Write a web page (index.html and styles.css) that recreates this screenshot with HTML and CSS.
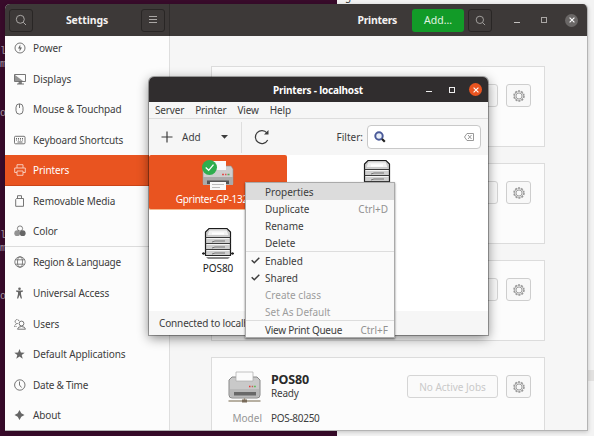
FILE: index.html
```html
<!DOCTYPE html>
<html lang="en">
<head>
<meta charset="utf-8">
<title>Printers - localhost</title>
<link rel="stylesheet" href="styles.css">
</head>
<body>
<svg class="defs" width="0" height="0">
  <symbol id="search" viewBox="0 0 12 12"><g fill="none" stroke="currentColor"><circle cx="5.3" cy="5.3" r="4"/><path d="M8.3 8.3L11 11"/></g></symbol>
  <symbol id="gear" viewBox="0 0 12 12"><g fill="none" stroke="currentColor"><circle cx="6" cy="6" r="5" stroke-width="1.5" stroke-dasharray="2 1.14"/><circle cx="6" cy="6" r="4.3" stroke-width=".7"/><circle cx="6" cy="6" r="3" stroke-width=".9"/></g></symbol>
  <symbol id="check" viewBox="0 0 9 7"><path d="M.7 3.2L3.3 5.7L8.3.8" fill="none" stroke="currentColor" stroke-width="1.5"/></symbol>
  <symbol id="close" viewBox="0 0 6 6"><path d="M.6.6L5.4 5.4M5.4.6L.6 5.4" stroke="currentColor" stroke-width="1.1"/></symbol>
  <symbol id="stack" viewBox="0 0 34 32">
    <path d="M4.500 28.500V5L8 1.500H26L29.500 5V28.500Z" fill="#cfcfcf"/>
    <path d="M8 3H26L28 8.500H6Z" fill="#f2f2f2" stroke="#bbb" stroke-width=".6"/>
    <path d="M11 6.500H23" stroke="#fff" stroke-width="2"/>
    <path d="M5.500 11.500H28.500M5.500 17.500H28.500M5.500 23.500H28.500" stroke="#f4f4f4"/>
    <path d="M4.500 28.500V5L8 1.500H26L29.500 5V28.500" fill="none" stroke="#1c1c1c" stroke-width="1.200"/>
    <path d="M4.500 10.500H29.500M4.500 16.500H29.500M4.500 22.500H29.500" stroke="#3c3c3c"/>
    <path d="M11 15L14 14H24M11 21L14 20H24M11 27L14 26H24" fill="none" stroke="#777"/>
    <path d="M1 26.500H5M29 26.500H33" stroke="#333"/>
    <circle cx="2.500" cy="26.500" r="1.200" fill="#222"/><circle cx="31.500" cy="26.500" r="1.200" fill="#222"/>
    <path d="M4 28.500H30" stroke="#222"/><path d="M5 30H29L27 32H7Z" fill="#888"/>
  </symbol>
</svg>
<div class="desktop">
  <div class="backdrop"><span class="terminal"></span><span class="page"></span></div>
  <pre class="term first">l
m</pre><pre class="term second">o</pre><pre class="term third">l
m</pre><pre class="term fourth">o</pre>
  <span class="stray">g</span><span class="strip"></span>

  <section class="settings">
    <header class="bar">
      <div class="bar-left">
        <span class="tool"><svg width="12" height="12"><use href="#search"/></svg></span>
        <b>Settings</b>
        <span class="tool"><svg width="8" height="8"><path d="M0 .5H8M0 3.500H8M0 6.500H8" stroke="currentColor"/></svg></span>
      </div>
      <div class="bar-right">
        <b>Printers</b><span class="add">Add…</span>
        <span class="tool"><svg width="11" height="11"><use href="#search"/></svg></span>
        <i class="min"></i><i class="max"></i><span class="round"><svg width="6" height="6"><use href="#close"/></svg></span>
      </div>
    </header>
    <div class="body">
      <nav class="side">
        <div class="row"><svg viewBox="0 0 12 12"><circle cx="6" cy="6" r="5" fill="none" stroke="currentColor" stroke-width=".9"/><path d="M6.300 2.500L4 6.500H5.700L5.500 9.500L8 5.500H6.300Z" fill="currentColor"/></svg>Power</div>
        <div class="row"><svg viewBox="0 0 12 12"><path d="M.5 1.500H11.500V8.500H.5ZM3 11H10M6 9V11" fill="none" stroke="currentColor" stroke-width=".9"/><path d="M1 2L9 8H1ZM5 8H8V11H4Z" fill="currentColor" opacity=".7"/></svg>Displays</div>
        <div class="row"><svg viewBox="0 0 12 12"><rect x="2" y=".8" width="7" height="10.400" rx="3.500" fill="none" stroke="currentColor" stroke-width=".9"/><path d="M5.500 1V5" stroke="currentColor" stroke-width=".9"/></svg>Mouse &amp; Touchpad</div>
        <div class="row"><svg viewBox="0 0 12 12"><rect x=".5" y="2.300" width="10.500" height="7.500" rx="1" fill="none" stroke="currentColor" stroke-width=".9"/><path d="M2 4.500H10M2 6H10" stroke="currentColor" stroke-dasharray="1 1"/><path d="M3.500 8H8.500" stroke="currentColor"/></svg>Keyboard Shortcuts</div>
        <div class="row active"><svg viewBox="0 0 12 12"><path d="M3 4V.7H9V4M3 8.500H.7V4H11.300V8.500H9M3 7H9V11.300H3Z" fill="none" stroke="currentColor" stroke-width=".9"/></svg>Printers</div>
        <div class="row"><svg viewBox="0 0 12 12"><path d="M2.500 3.500H9.500V11.300H1.700V4.500ZM3.500 3.300V.7H7.500V3.300" fill="none" stroke="currentColor" stroke-width=".9"/></svg>Removable Media</div>
        <div class="row last"><svg viewBox="0 0 12 12"><circle cx="6" cy="3.500" r="2.600" fill="none" stroke="currentColor" stroke-width=".8"/><circle cx="3.200" cy="8.200" r="2.900" fill="currentColor" opacity=".7"/><circle cx="8.700" cy="8.200" r="2.900" fill="currentColor"/></svg>Color</div>
        <div class="row"><svg viewBox="0 0 12 12"><g fill="none" stroke="currentColor" stroke-width=".8"><circle cx="6" cy="6" r="5.200"/><ellipse cx="6" cy="6" rx="2.500" ry="5.200"/><path d="M1.500 3.800H10.500M1.500 8.200H10.500"/></g></svg><span class="snug">Region &amp; Language</span></div>
        <div class="row"><svg viewBox="0 0 12 12"><circle cx="5.500" cy="1.800" r="1.300" fill="currentColor"/><path d="M2 3.500H9V4.600L7 5.200V7L8 11.500H6.800L5.500 8L4.200 11.500H3L4 7V5.200L2 4.600Z" fill="currentColor"/></svg>Universal Access</div>
        <div class="row"><svg viewBox="0 0 12 12"><g fill="none" stroke="currentColor" stroke-width=".9"><circle cx="7.500" cy="5.500" r="2.400"/><path d="M3.500 11.200Q4 8.500 7.500 8.500T11.500 11.200Z"/><path d="M5 3A2 2 0 1 0 3.500 5.500Q1 6 .5 8.500H2.500" stroke-dasharray="1.500 .5"/></g></svg>Users</div>
        <div class="row"><svg viewBox="0 0 12 12"><path d="M5.500 1L6.900 4.500L10.700 4.700L7.700 7L8.700 10.700L5.500 8.600L2.300 10.700L3.300 7L.3 4.700L4.100 4.500Z" fill="currentColor"/></svg>Default Applications</div>
        <div class="row"><svg viewBox="0 0 12 12"><circle cx="5.800" cy="6" r="5.200" fill="none" stroke="currentColor" stroke-width=".9"/><path d="M5.500 2.500V6L7.500 8.500" fill="none" stroke="currentColor" stroke-width=".9"/></svg><span class="snug">Date &amp; Time</span></div>
        <div class="row"><svg viewBox="0 0 12 12"><path d="M5.500 1L7.300 4.200L10.500 6L7.300 7.800L5.500 11L3.700 7.800L.5 6L3.700 4.200Z" fill="currentColor"/></svg>About</div>
      </nav>
      <main class="cards">
        <article class="card"><div class="info"></div><span class="jobs"></span><span class="cog"><svg width="12" height="12"><use href="#gear"/></svg></span></article>
        <article class="card"><div class="info"></div><span class="jobs"></span><span class="cog"><svg width="12" height="12"><use href="#gear"/></svg></span></article>
        <article class="card"><div class="info"></div><span class="jobs"></span><span class="cog"><svg width="12" height="12"><use href="#gear"/></svg></span></article>
        <article class="card">
          <div class="info">
            <svg class="printer" width="33" height="32" viewBox="0 0 33 32"><path d="M4 6H29L32 9V24Q32 27 29 27H4Q1 27 1 24V9Z" fill="#c9c9c9" stroke="#888"/><path d="M2 18H31V24Q31 26 29 26H4Q2 26 2 24Z" fill="#b9b9b9"/><path d="M8 10V1H25V10Z" fill="#fbfbfb" stroke="#aaa" stroke-width=".7"/><path d="M6 21H28V24.500H6Z" fill="#686868"/><path d="M21 15.500H22.500" stroke="#e33" stroke-width="1.500"/><path d="M23.700 15.500H25.200" stroke="#b65" stroke-width="1.500"/><path d="M26.200 15.500H27.700" stroke="#4b4" stroke-width="1.500"/><path d="M.5 30H32.500M16.500 27V30" stroke="#a09684" stroke-width="1.300"/><rect x="14" y="28.500" width="5" height="3" fill="#786a59"/></svg>
            <div class="name"><strong>POS80</strong><span>Ready</span></div>
            <span class="label">Model</span><span class="model">POS-80250</span>
          </div>
          <span class="jobs">No Active Jobs</span><span class="cog"><svg width="12" height="12"><use href="#gear"/></svg></span>
        </article>
      </main>
    </div>
  </section>

  <section class="dialog">
    <header class="title"><b>Printers - localhost</b><div class="controls"><i class="min"></i><i class="max"></i><span class="round hot"><svg width="6" height="6"><use href="#close"/></svg></span></div></header>
    <div class="menubar"><span>Server</span><span>Printer</span><span>View</span><span>Help</span></div>
    <div class="toolbar">
      <svg width="12" height="12"><path d="M6 .5V11.500M.5 6H11.500" stroke="#3d3d3d" stroke-width="1.200"/></svg>
      <span class="addp">Add</span>
      <svg width="7" height="4"><path d="M0 0H7L3.500 3.800Z" fill="#3d3d3d"/></svg>
      <i class="divider"></i>
      <svg width="17" height="17" viewBox="0 0 17 17"><path d="M14 4A6.500 6.500 0 1 0 14.700 11" fill="none" stroke="#3d3d3d" stroke-width="1.200"/><path d="M15.500 1V5.500H11Z" fill="#3d3d3d"/></svg>
      <span class="filter">Filter:</span>
      <div class="entry">
        <svg width="12" height="12"><circle cx="5" cy="5" r="3.700" fill="#e9eff8" stroke="#4a5a99" stroke-width="2"/><path d="M8 8L10.800 10.800" stroke="#222" stroke-width="2.200"/></svg>
        <svg width="10" height="8"><path d="M3 .5H9.500V7.500H3L.5 4ZM4 2L7.500 6M7.500 2L4 6" fill="none" stroke="#8d8d8d" stroke-width=".9"/></svg>
      </div>
    </div>
    <div class="icons">
      <div class="item chosen">
        <svg width="32" height="32" viewBox="0 0 32 32"><path d="M3 6H29L31 9V24H1V9Z" fill="#cecece" stroke="#919191" stroke-width=".6"/><path d="M1 17H31V25H1Z" fill="#aaa"/><path d="M8 10V1H24V10Z" fill="#fafafa"/><path d="M20 14.500H22M23 14.500H24.500" stroke="#e05050" stroke-width="1.600"/><path d="M25.500 14.500H27.500" stroke="#5aaa5a" stroke-width="1.600"/><path d="M5 20.500H27V24H5Z" fill="#555"/><path d="M8 22H24V30H8Z" fill="#f8f8f8"/><path d="M10 24.500H22M10 27.500H18" stroke="#bbb"/><circle cx="7.500" cy="7.500" r="7.500" fill="#2fae4e"/><path d="M3.700 7.500L6.700 10.300L11.500 4.700" fill="none" stroke="#fff" stroke-width="1.300"/></svg>
        <span>Gprinter-GP-1324D</span>
      </div>
      <div class="item"><svg width="34" height="32"><use href="#stack"/></svg></div>
      <div class="item lower"><svg width="34" height="32"><use href="#stack"/></svg><span>POS80</span></div>
    </div>
    <footer class="status">Connected to localhost</footer>
  </section>

  <div class="menu">
    <div class="opt on"><span>Properties</span></div>
    <div class="opt"><span>Duplicate</span><em>Ctrl+D</em></div>
    <div class="opt"><span>Rename</span></div>
    <div class="opt"><span>Delete</span></div>
    <hr>
    <div class="opt"><svg width="9" height="7"><use href="#check"/></svg><span>Enabled</span></div>
    <div class="opt"><svg width="9" height="7"><use href="#check"/></svg><span>Shared</span></div>
    <div class="opt off"><span>Create class</span></div>
    <div class="opt off"><span>Set As Default</span></div>
    <hr>
    <div class="opt"><span class="snug">View Print Queue</span><em>Ctrl+F</em></div>
  </div>
</div>
</body>
</html>
```
FILE: styles.css
```css
* { box-sizing: border-box; }
body { margin: 0; font: 10px/14px "Noto Sans", "Open Sans", sans-serif; color: #3d3d3d; }
svg { flex: none; display: block; }
.defs { position: absolute; }
.desktop { position: relative; width: 594px; height: 436px; overflow: hidden; }
.backdrop { display: flex; height: 100%; }
.terminal { width: 337px; background: #380b2a; }
.page { flex: 1; background: #f3f3f3; }
.term { position: absolute; left: 0; margin: 0; width: 5px; overflow: hidden; font: 10px/13px "Liberation Mono", monospace; color: #a99aa4; }
.first { top: 45px; }
.second { top: 107px; }
.third { top: 229px; }
.fourth { top: 290px; }
.stray { position: absolute; left: 345px; top: -11px; }
.strip { position: absolute; left: 587px; top: 370px; width: 7px; height: 11px; background: #e2e1e0; }

.settings { position: absolute; left: 5px; top: 4px; width: 583px; height: 427px; border-radius: 5px 5px 0 0; overflow: hidden; background: #f6f6f6; border-right: 1px solid #b4b4b4; border-bottom: 1px solid #b4b4b4; box-shadow: 0 1px 4px rgba(0,0,0,.2); }
.bar { height: 32px; display: flex; background: #3d3938; color: #f4f2f1; font-size: 11px; }
.bar b { font-size: 10.5px; letter-spacing: -.1px; }
.bar-left b { margin-left: 0; }
.bar-left { width: 165px; padding: 0 4px; display: flex; align-items: center; justify-content: space-between; border-right: 1px solid #302d2c; }
.tool { width: 24px; height: 23px; display: flex; align-items: center; justify-content: center; border: 1px solid #292625; border-radius: 3px; color: #aaa7a5; }
.bar-right { flex: 1; display: flex; align-items: center; padding-right: 9px; justify-content: flex-end; }
.bar-right b { letter-spacing: -.3px; }
.add { width: 52px; height: 23px; margin: 0 4px 0 15px; background: #129b28; border-radius: 3px; display: flex; align-items: center; justify-content: center; color: #e0f4e3; font-size: 10.5px; }
.min { width: 6px; height: 1px; background: #c4c1bf; margin-top: 4px; }
.max { width: 6px; height: 6px; border: 1px solid #aaa7a5; }
.bar .min { margin-left: 22px; }
.bar .max { margin-left: 21px; }
.round { width: 13px; height: 13px; border-radius: 50%; background: #6a6766; color: #fff; display: flex; align-items: center; justify-content: center; }
.bar .round { margin-left: 18px; }
.body { height: 394px; display: flex; overflow: hidden; }
.side { width: 165px; background: #fcfcfc; border-right: 1px solid #dedede; overflow: hidden; }
.side .row:first-child { margin-top: -3px; }
.row { height: 30.6px; padding-left: 9px; display: flex; align-items: center; gap: 7px; letter-spacing: -.1px; white-space: nowrap; }
.row svg { width: 12px; height: 12px; color: #666; }
.snug { letter-spacing: -.25px; }
.active { background: #e95420; color: #fff; border-bottom: 1px solid #cb4417; }
.active svg { color: #f9d4c6; }
.last { border-bottom: 1px solid #dcdcdc; }

.cards { flex: 1; padding: 30px 42px 0 41px; display: flex; flex-direction: column; gap: 16px; }
.card { flex: none; height: 81px; padding: 17px 13px 0 17px; display: flex; background: #fcfcfc; border: 1px solid #dcdcdc; }
.info { flex: 1; display: grid; grid-template-columns: 33px 1fr; column-gap: 9px; align-content: start; margin-top: -6px; }
.printer { margin-top: 2px; margin-left: -1px; }
.name { display: flex; flex-direction: column; padding-top: 3px; height: 42px; }
.name strong { font-size: 12.5px; letter-spacing: -.2px; line-height: 15px; color: #2a2a2a; }
.name span { line-height: 12px; letter-spacing: -.2px; }
.label { color: #969696; text-align: right; }
.model { letter-spacing: -.3px; }
.jobs { width: 91px; height: 23px; border: 1px solid #d5d5d5; border-radius: 3px; color: #c9c9c9; display: flex; align-items: center; justify-content: center; background: #fafafa; }
.cog { width: 25px; height: 23px; margin-left: 8px; border: 1px solid #cecece; border-radius: 3px; display: flex; align-items: center; justify-content: center; color: #999; background: #f8f8f8; }

.dialog { position: absolute; left: 149px; top: 77px; width: 339px; height: 258px; display: flex; flex-direction: column; background: #f6f6f6; border-radius: 5px 5px 0 0; overflow: hidden; box-shadow: 0 0 0 1px rgba(0,0,0,.3), 0 3px 12px rgba(0,0,0,.48); }
.title { height: 25px; background: #302d2e; color: #fff; display: flex; align-items: center; padding-left: 124px; font-size: 10px; }
.title b { letter-spacing: -.2px; white-space: nowrap; }
.controls { flex: 1; display: flex; align-items: center; justify-content: flex-end; padding-right: 6px; }
.controls .max { margin: 0 14px 0 17px; border-color: #eee; }
.controls .min { background: #eee; }
.round.hot { background: #e95420; }
.menubar { height: 17px; display: flex; align-items: center; gap: 11px; padding-left: 6px; border-bottom: 1px solid #ddd; letter-spacing: -.15px; }
.toolbar { height: 36px; display: flex; align-items: center; padding: 0 7px 0 12px; }
.addp { width: 39px; margin-left: 9px; }
.divider { width: 1px; height: 31px; background: #dedede; margin: 0 11px 0 13px; }
.filter { margin: 0 4px 0 auto; }
.entry { width: 114px; height: 24px; padding: 0 6px; border: 1px solid #c9c9c9; border-radius: 4px; background: #fff; display: flex; align-items: center; justify-content: space-between; }
.icons { height: 156px; background: #fff; display: grid; grid-template-columns: 138px 138px; column-gap: 21px; grid-template-rows: 55px 80px; color: #222; }
.item { display: flex; flex-direction: column; align-items: center; padding-top: 4px; overflow: hidden; }
.item span { line-height: 15px; white-space: nowrap; letter-spacing: -.1px; }
.chosen { padding-top: 5px; background: #e95420; color: #fff; border-radius: 2px; border-bottom: 1px solid #f4b98f; }
.chosen span { letter-spacing: -.3px; }
.lower { padding-top: 17px; }
.lower span { line-height: 18px; }
.status { height: 24px; padding-left: 10px; line-height: 24px; letter-spacing: -.15px; }

.menu { position: absolute; left: 245px; top: 182px; width: 150px; height: 156px; border: 1px solid #aaa; background: #fafafa; box-shadow: 0 1px 2px rgba(0,0,0,.5); }
.opt { position: relative; height: 17px; padding: 0 6px 0 19px; display: flex; align-items: center; justify-content: space-between; white-space: nowrap; }
.opt svg { position: absolute; left: 5px; top: 5px; }
.opt em { font-style: normal; color: #929292; }
.on { background: #dcdcdc; }
.off { color: #9d9d9d; }
.menu hr { height: 1px; margin: 0; border: 0; background: #ddd; }
```
